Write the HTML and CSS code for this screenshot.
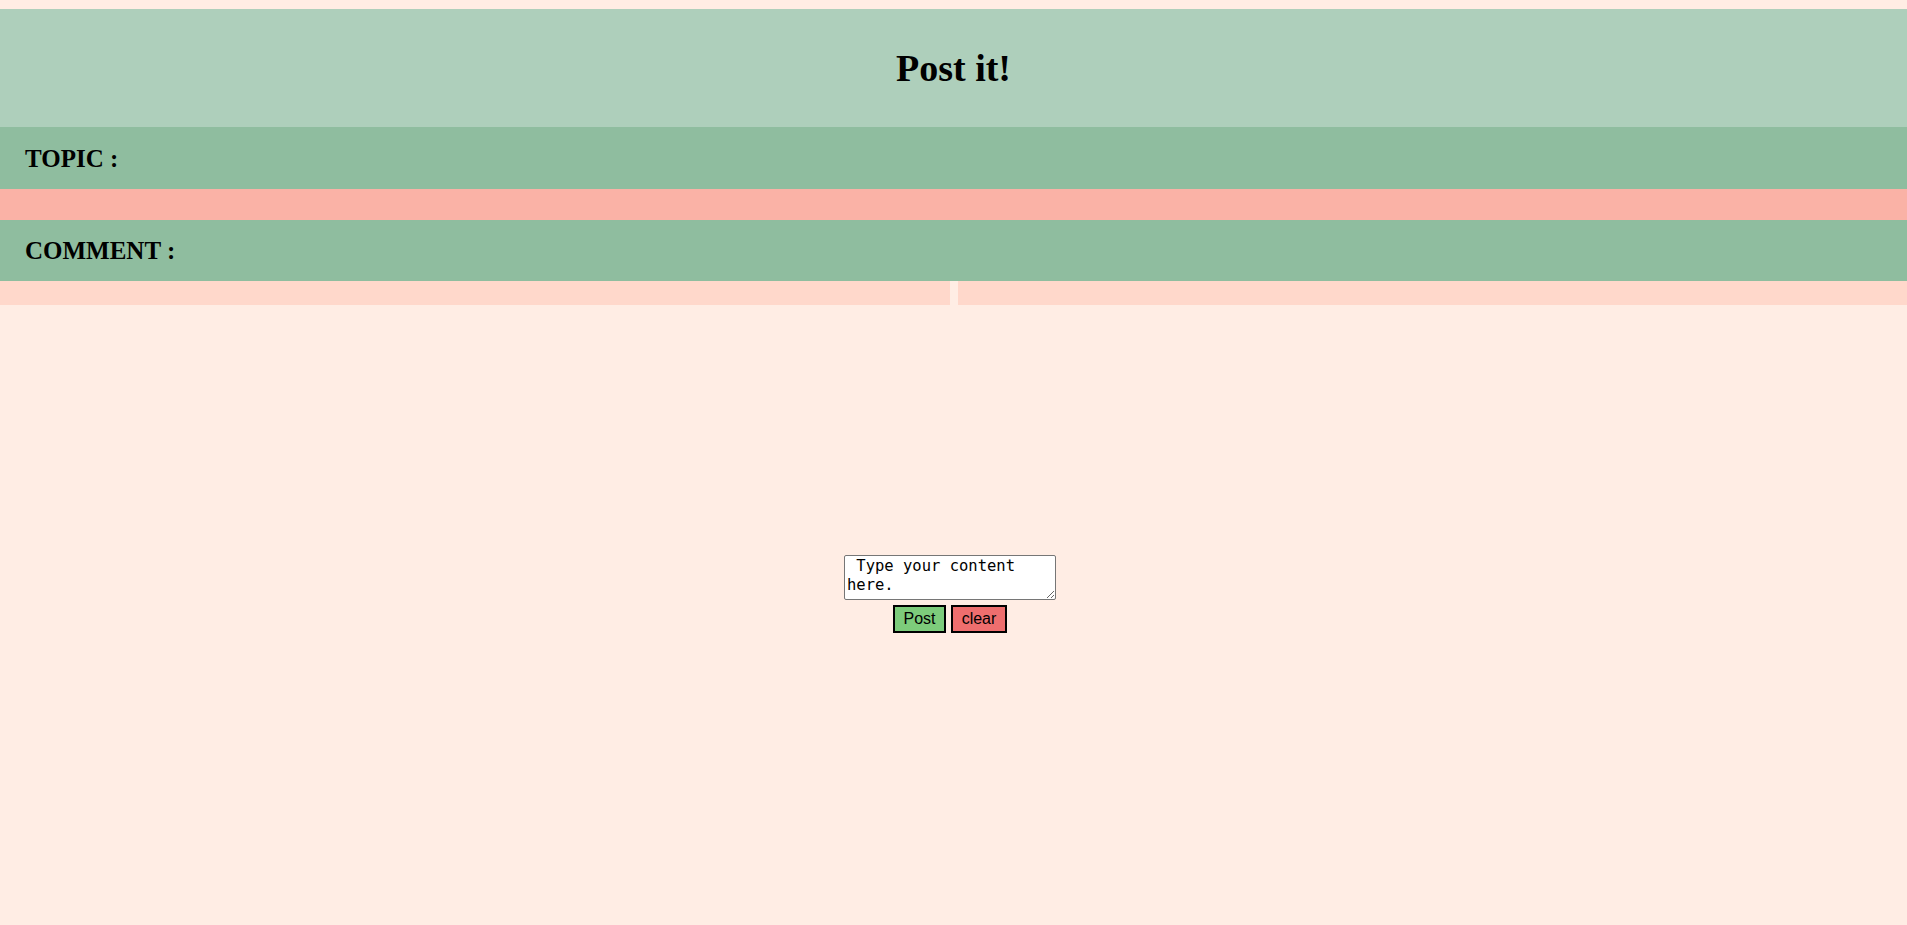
FILE: index.html
```html
<!DOCTYPE html>
<html lang="en">
<head>
<meta charset="utf-8">
<title>Post it!</title>
<link rel="stylesheet" href="styles.css">
</head>
<body>
<header class="header">
  <h1 class="title">Post it!</h1>
</header>
<div class="label-bar"><h2 class="label">TOPIC :</h2></div>
<div class="topic-field"></div>
<div class="label-bar label-bar--comment"><h2 class="label">COMMENT :</h2></div>
<div class="split">
  <div class="split-cell"></div>
  <div class="split-cell"></div>
</div>
<main class="composer">
  <textarea class="content"> Type your content here.</textarea>
  <div class="actions">
    <button class="btn btn-post" type="button">Post</button>
    <button class="btn btn-clear" type="button">clear</button>
  </div>
</main>
</body>
</html>
```

FILE: styles.css
```css
html, body {
  margin: 0;
  padding: 0;
}
body {
  background: #ffede4;
  padding-top: 9px;
  font-family: "Liberation Serif", "Times New Roman", serif;
  color: #000;
  min-height: 925px;
  box-sizing: border-box;
}
.header {
  background: #aecfbb;
  height: 118px;
  display: flex;
  align-items: center;
  justify-content: center;
}
.title {
  margin: 0;
  font-size: 38px;
  font-weight: bold;
  line-height: 1;
}
.label-bar {
  background: #8fbd9f;
  height: 62px;
  display: flex;
  align-items: center;
  padding-left: 25px;
}
.label-bar--comment {
  height: 61px;
}
.label {
  margin: 0;
  font-size: 25px;
  font-weight: bold;
  line-height: 1;
}
.topic-field {
  background: #fab2a6;
  height: 31px;
}
.split {
  display: grid;
  grid-template-columns: 950px 1fr;
  column-gap: 8px;
  height: 24px;
}
.split-cell {
  background: #ffd8cb;
}
.composer {
  display: flex;
  flex-direction: column;
  align-items: center;
  padding-top: 250px;
  padding-right: 7px;
}
.content {
  width: 212px;
  height: 45px;
  box-sizing: border-box;
  margin: 0;
  padding: 1px 2px;
  border: 1px solid #767676;
  border-radius: 2px;
  background: #fff;
  font-family: "DejaVu Sans Mono", "Liberation Mono", monospace;
  font-size: 15.5px;
  line-height: 19px;
  color: #000;
  overflow: hidden;
}
.actions {
  display: flex;
  gap: 5px;
  margin-top: 5px;
}
.btn {
  height: 28px;
  box-sizing: border-box;
  border: 2px solid #000;
  border-radius: 0;
  font-family: "Liberation Sans", Arial, sans-serif;
  font-size: 16px;
  color: #000;
  padding: 0 6px;
  line-height: 24px;
}
.btn-post {
  background: #7dcc7b;
  width: 53px;
}
.btn-clear {
  background: #ee6e6e;
  width: 56px;
}
```
